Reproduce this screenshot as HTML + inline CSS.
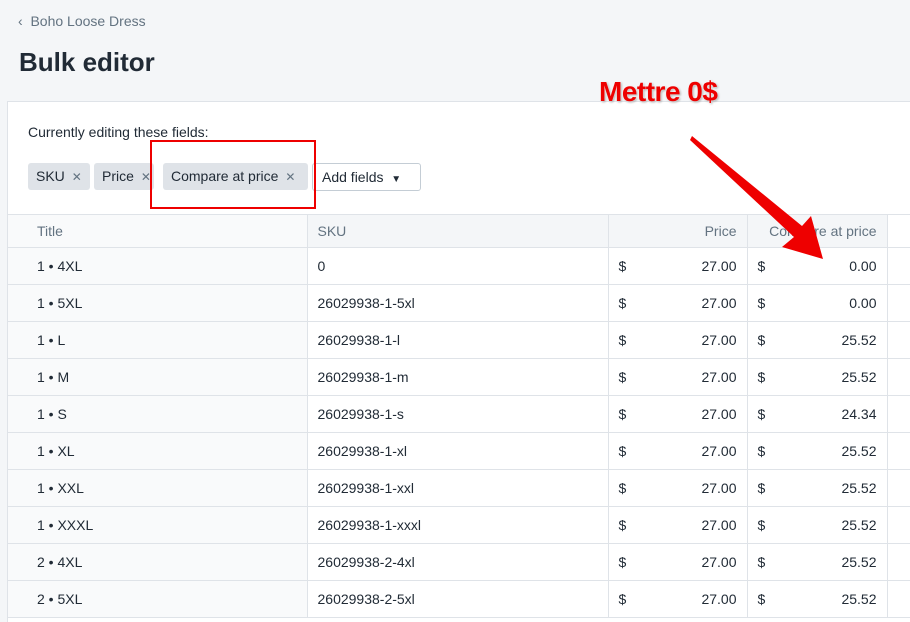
<!DOCTYPE html>
<html><head><style>
body{margin:0;width:910px;height:605px;overflow:hidden;background:#f4f6f8;font-family:"Liberation Sans",sans-serif;color:#212b36;position:relative}
.back{position:absolute;left:18px;top:13px;font-size:14px;color:#637381}
h1{position:absolute;left:19px;top:47px;margin:0;font-size:26px;font-weight:bold;color:#212b36}
.card{position:absolute;left:7px;top:101px;width:920px;height:520px;background:#fff;border-top:1px solid #dfe3e8;border-left:1px solid #dfe3e8}
.lbl{position:absolute;left:20px;top:22px;font-size:14px}
.tag{position:absolute;top:61px;height:27px;background:#dfe3e8;border-radius:3px;font-size:14px;line-height:27px;padding-left:8px;color:#212b36;box-sizing:border-box;white-space:nowrap}
.tag i{font-style:normal;color:#637381;font-size:12px;margin-left:7px}
.btn{position:absolute;left:304px;top:61px;width:109px;height:28px;border:1px solid #c4cdd5;border-radius:3px;font-size:14px;line-height:26px;padding-left:9px;box-sizing:border-box}
table{position:absolute;left:0;top:112px;border-collapse:collapse;font-size:14px;table-layout:fixed;width:919px}
td,th{border:1px solid #dfe3e8;height:36px;padding:0 10px;font-weight:normal;overflow:hidden;white-space:nowrap}
th{background:#f4f6f8;color:#637381;height:32px;text-align:left}
td:first-child,th:first-child{border-left:none;background:#f9fafb;padding-left:29px}
.r{text-align:right}
.d{display:flex;justify-content:space-between}
</style></head><body>
<div class="back">&#8249;&nbsp; Boho Loose Dress</div>
<h1>Bulk editor</h1>
<div class="card">
<div class="lbl">Currently editing these fields:</div>
<div class="tag" style="left:20px;width:62px">SKU<i>✕</i></div>
<div class="tag" style="left:86px;width:60px">Price<i>✕</i></div>
<div class="tag" style="left:155px;width:145px">Compare at price<i>✕</i></div>
<div class="btn">Add fields &nbsp;<span style="font-size:10px">▼</span></div>
<table>
<colgroup><col style="width:299px"><col style="width:301px"><col style="width:139px"><col style="width:140px"><col style="width:40px"></colgroup>
<tr><th>Title</th><th>SKU</th><th class="r">Price</th><th class="r">Compare at price</th><th style="background:#fff"></th></tr>
<tr><td>1 • 4XL</td><td>0</td><td><div class="d"><span>$</span><span>27.00</span></div></td><td><div class="d"><span>$</span><span>0.00</span></div></td><td></td></tr>
<tr><td>1 • 5XL</td><td>26029938-1-5xl</td><td><div class="d"><span>$</span><span>27.00</span></div></td><td><div class="d"><span>$</span><span>0.00</span></div></td><td></td></tr>
<tr><td>1 • L</td><td>26029938-1-l</td><td><div class="d"><span>$</span><span>27.00</span></div></td><td><div class="d"><span>$</span><span>25.52</span></div></td><td></td></tr>
<tr><td>1 • M</td><td>26029938-1-m</td><td><div class="d"><span>$</span><span>27.00</span></div></td><td><div class="d"><span>$</span><span>25.52</span></div></td><td></td></tr>
<tr><td>1 • S</td><td>26029938-1-s</td><td><div class="d"><span>$</span><span>27.00</span></div></td><td><div class="d"><span>$</span><span>24.34</span></div></td><td></td></tr>
<tr><td>1 • XL</td><td>26029938-1-xl</td><td><div class="d"><span>$</span><span>27.00</span></div></td><td><div class="d"><span>$</span><span>25.52</span></div></td><td></td></tr>
<tr><td>1 • XXL</td><td>26029938-1-xxl</td><td><div class="d"><span>$</span><span>27.00</span></div></td><td><div class="d"><span>$</span><span>25.52</span></div></td><td></td></tr>
<tr><td>1 • XXXL</td><td>26029938-1-xxxl</td><td><div class="d"><span>$</span><span>27.00</span></div></td><td><div class="d"><span>$</span><span>25.52</span></div></td><td></td></tr>
<tr><td>2 • 4XL</td><td>26029938-2-4xl</td><td><div class="d"><span>$</span><span>27.00</span></div></td><td><div class="d"><span>$</span><span>25.52</span></div></td><td></td></tr>
<tr><td>2 • 5XL</td><td>26029938-2-5xl</td><td><div class="d"><span>$</span><span>27.00</span></div></td><td><div class="d"><span>$</span><span>25.52</span></div></td><td></td></tr>
</table>
</div>
<div style="position:absolute;left:150px;top:140px;width:162px;height:65px;border:2px solid #e00"></div>
<div style="position:absolute;left:599px;top:76px;font-size:28px;font-weight:bold;color:#e00;text-shadow:0 0 2px #fff,1px 1px 2px #999;letter-spacing:-0.5px">Mettre 0$</div>
<svg style="position:absolute;left:0;top:0" width="910" height="605"><path d="M690,140 L692,136 L802,226 L811,216 L823,259 L782,247 L794,237 Z" fill="#e00"/></svg>
</body></html>
